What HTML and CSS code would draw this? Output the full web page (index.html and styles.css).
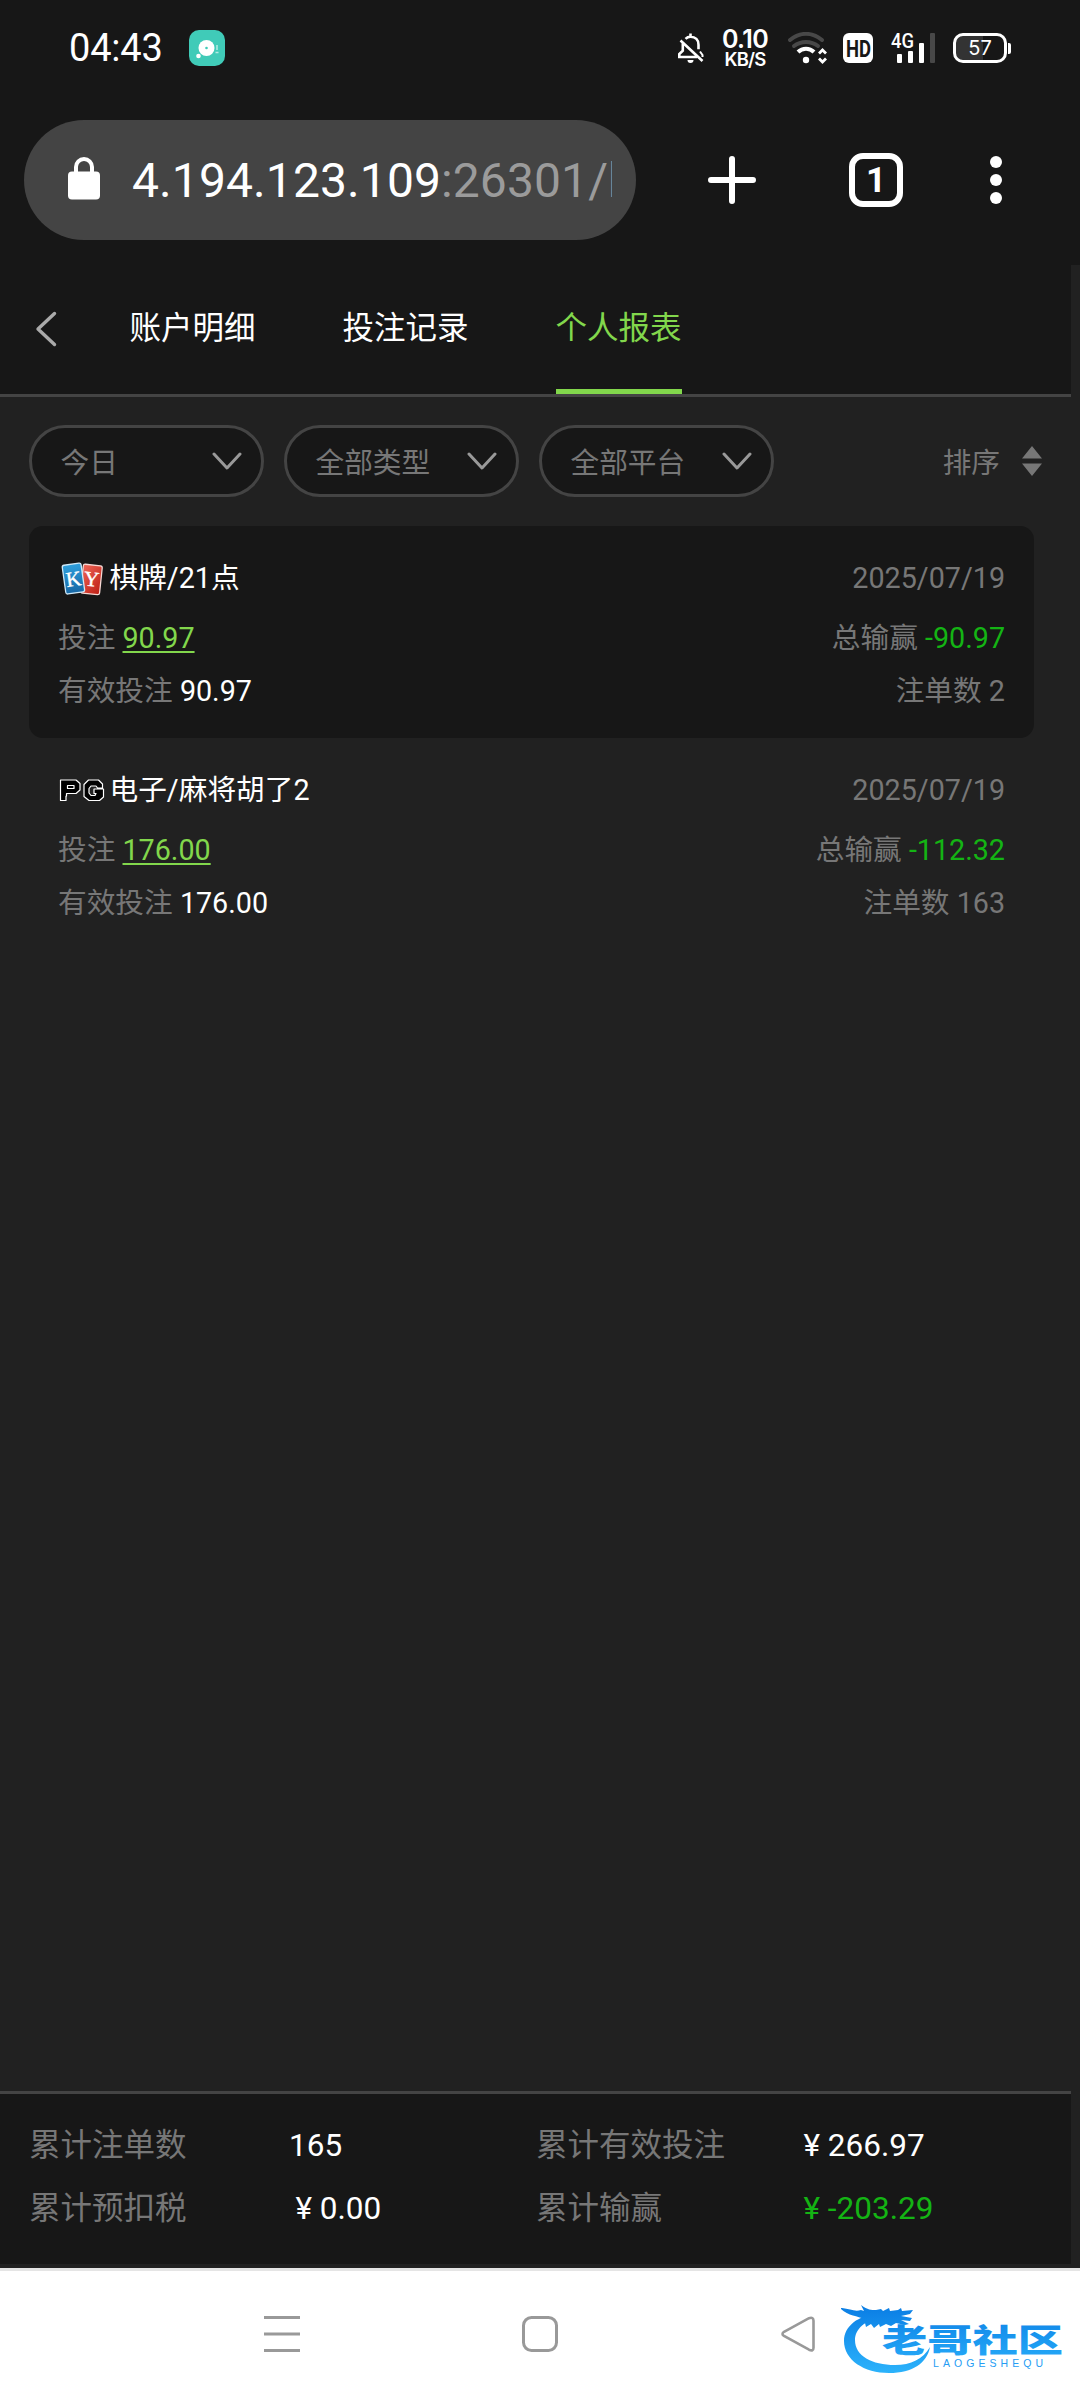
FILE: index.html
```html
<!DOCTYPE html>
<html lang="zh-CN">
<head>
<meta charset="utf-8">
<title>个人报表</title>
<link rel="stylesheet" href="styles.css">
</head>
<body>
<div class="screen">
  <header class="status">
    <span class="clock">04:43</span>
    <svg class="app-icon" width="36" height="36" viewBox="0 0 36 36"><rect width="36" height="36" rx="10" fill="#40cbb8"/><circle cx="17.500" cy="18" r="8" fill="#fff"/><circle cx="17.500" cy="18" r="1.300" fill="#40cbb8"/><circle cx="9.500" cy="26" r="2.300" fill="#fff"/><path d="M28 15v5M26.500 22.500h3" stroke="#b5ebe2" stroke-width="1.500"/></svg>
    <div class="indicators">
      <svg class="bell" width="27" height="32" viewBox="0 0 27 32" fill="none" stroke="#fff" stroke-width="2.600"><path d="M8.500 6.800C10 5.300 11.700 4.700 13.500 4.700c5 0 8 3.400 8 8v4.500M13.500 1.500v3M5.800 11.500v7.200L2.300 22v3H20M3.500 8.500 25.500 29"/><path d="M23 19.500l2.500 3.500v2" stroke-width="2"/><path d="M10.500 28h6a3 3 0 0 1-6 0z" fill="#fff" stroke="none"/></svg>
      <div class="speed"><b class="rate">0.10</b><b class="unit">KB/S</b></div>
      <svg class="wifi" width="40" height="32" viewBox="0 0 40 32" fill="none" stroke-linecap="round"><path d="M2 8C12-.2 24-.2 34 8" stroke="#484848" stroke-width="4"/><path d="M6 14C13 8.500 23 8.500 30 14" stroke="#484848" stroke-width="4"/><path d="M10 20c4.500-4.500 11.500-4.500 16 0" stroke="#fff" stroke-width="4" stroke-linecap="butt"/><circle cx="18" cy="28" r="3.200" fill="#fff"/><path d="M31 21.500l3.500-3.500 3.500 3.500M31 26.500l3.500 3.500 3.500-3.500" stroke="#fff" stroke-width="2.800" stroke-linecap="butt"/></svg>
      <svg class="hd" width="30" height="30" viewBox="0 0 30 30"><rect width="30" height="30" rx="6" fill="#fff"/><text x="3" y="23.500" textLength="25" lengthAdjust="spacingAndGlyphs">HD</text></svg>
      <div class="cell"><svg width="44" height="30" viewBox="0 0 44 30"><text class="net" x="0" y="14.500" textLength="23" lengthAdjust="spacingAndGlyphs">4G</text><rect x="6" y="21" width="5" height="9" rx="1" fill="#fff"/><rect x="17" y="18" width="5" height="12" rx="1" fill="#fff"/><rect x="28" y="10" width="5" height="20" rx="1" fill="#fff"/><rect x="39" width="5" height="30" rx="1" fill="#484848"/></svg></div>
      <div class="battery"><span>57</span></div>
    </div>
  </header>

  <div class="toolbar">
    <div class="omnibox">
      <svg class="lock" width="32" height="43" viewBox="0 0 32 43"><path d="M8 17V10a8 8 0 0 1 16 0v7" fill="none" stroke="#fff" stroke-width="4"/><rect y="14.500" width="32" height="28" rx="4" fill="#fff"/></svg>
      <div class="url">4.194.123.109<span class="port">:26301/h</span></div>
    </div>
    <svg class="plus" width="48" height="48" viewBox="0 0 48 48"><path d="M24 3v42M3 24h42" stroke="#fff" stroke-width="6" stroke-linecap="round"/></svg>
    <div class="tab-count">1</div>
    <svg class="dots" width="12" height="48" viewBox="0 0 12 48" fill="#fff"><circle cx="6" cy="6" r="6"/><circle cx="6" cy="24" r="6"/><circle cx="6" cy="42" r="6"/></svg>
  </div>

  <main class="page">
    <nav class="tabs">
      <svg class="back" width="22" height="36" viewBox="0 0 22 36"><path d="M19.500 2.500 3 18l16.500 15.500" fill="none" stroke="#aaa" stroke-width="3.400" stroke-linecap="round" stroke-linejoin="round"/></svg>
      <span class="tab">账户明细</span>
      <span class="tab">投注记录</span>
      <span class="tab active">个人报表</span>
    </nav>

    <div class="filters">
      <div class="pill">今日<svg class="chev" width="30" height="18" viewBox="0 0 30 18"><path d="M2 2l13 14L28 2"/></svg></div>
      <div class="pill">全部类型<svg class="chev" width="30" height="18" viewBox="0 0 30 18"><path d="M2 2l13 14L28 2"/></svg></div>
      <div class="pill">全部平台<svg class="chev" width="30" height="18" viewBox="0 0 30 18"><path d="M2 2l13 14L28 2"/></svg></div>
      <div class="sort">排序<svg width="20" height="30" viewBox="0 0 20 30" fill="#777"><path d="M10 0l10 12.500H0zM10 30L0 17.500h20z"/></svg></div>
    </div>

    <section class="list">
      <article class="record shaded">
        <div class="row title"><span class="name"><svg class="brand" width="48" height="36" viewBox="0 0 48 36">
          <defs><linearGradient id="blue" x2="0" y2="1"><stop stop-color="#2f9fdc"/><stop offset="1" stop-color="#1767a5"/></linearGradient><linearGradient id="red" x2="1" y2="1"><stop stop-color="#ef6658"/><stop offset="1" stop-color="#bd1e13"/></linearGradient></defs>
          <rect x="24" y="4" width="19" height="29" rx="2" transform="rotate(6 34 18)" fill="url(#red)" stroke="#f5d8d4" stroke-width="1.300"/><rect x="6" y="3" width="19" height="29" rx="2" transform="rotate(-8 16 18)" fill="url(#blue)" stroke="#cfe9f8" stroke-width="1.300"/><text x="8" y="25" class="card-letter" transform="rotate(-8 16 18)">K</text><text x="26" y="25" class="card-letter" transform="rotate(6 34 18)">Y</text></svg><span class="game">棋牌/21点</span></span><span>2025/07/19</span></div>
        <div class="row bet"><span>投注 <a class="link">90.97</a></span><span>总输赢 <em class="loss">-90.97</em></span></div>
        <div class="row valid"><span>有效投注 <em class="value">90.97</em></span><span>注单数 2</span></div>
      </article>
      <article class="record">
        <div class="row title"><span class="name"><svg class="brand" width="48" height="36" viewBox="0 0 48 36" fill="#000" stroke="#fff" stroke-width="1.200" stroke-linejoin="round"><path d="M2.500 7h15.500l4 3.500v6.500l-4 3.500h-9.500v2.500H8v4.500H2.500zM9.500 12.500h6.500v3H9.500z"/><path d="M30.500 7h10l4 4v4h-5l-1.500-2H33l-2 2.500v4.500l2 2.500h4l1-2h-2v-4.500h9.500v8L41.500 27.500H31l-5-4v-12z"/></svg><span class="game">电子/麻将胡了2</span></span><span>2025/07/19</span></div>
        <div class="row bet"><span>投注 <a class="link">176.00</a></span><span>总输赢 <em class="loss">-112.32</em></span></div>
        <div class="row valid"><span>有效投注 <em class="value">176.00</em></span><span>注单数 163</span></div>
      </article>
    </section>

    <footer class="summary">
      <span>累计注单数</span><span class="value">165</span><span>累计有效投注</span><span class="value money">¥ 266.97</span>
      <span>累计预扣税</span><span class="value money">¥ 0.00</span><span>累计输赢</span><span class="loss money">¥ -203.29</span>
    </footer>
  </main>

  <div class="navbar">
    <svg class="nav-menu" width="36" height="36" viewBox="0 0 36 36" stroke="#999" stroke-width="3"><path d="M0 1.500h36M0 18h36M0 34.500h36"/></svg>
    <svg class="nav-home" width="36" height="36" viewBox="0 0 36 36"><rect x="1.500" y="1.500" width="33" height="33" rx="8" fill="none" stroke="#999" stroke-width="3"/></svg>
    <svg class="nav-back" width="34" height="36" viewBox="0 0 34 36"><path d="M3 15.800 28 2.200q4.500-1.500 4.500 2.500v27q0 4-4.500 2L3 20q-3-2.100 0-4.200z" fill="none" stroke="#999" stroke-width="2.600"/></svg>
    <svg class="watermark" width="240" height="90" viewBox="0 0 240 90">
      <defs><linearGradient id="wave" gradientUnits="userSpaceOnUse" x1="0" y1="14" x2="0" y2="78"><stop stop-color="#0b7fe5"/><stop offset="1" stop-color="#2bb2fb"/></linearGradient></defs>
      <path fill="url(#wave)" d="M41 21C20 19 3 31 3 47c0 19 20 32 45 32 24 0 38-10 41-26-7 12-19 18-35 18-23 0-40-9-40-25 0-11 10-20 27-23z"/>
      <path fill="url(#wave)" d="M1 14c8 1 13 4 19 2l3 1-3-6c7 5 10 5 15 5l5-1 2 2 6-3 1 3 8-1 3-2 1 3 11-1-3 4-9 2 11 2-2 3-9-1 8 4-4 1-9-2-5 3-5-2-6 3-1-3-5 4-3-4-5 3-1-4-5 1 4-5c-6-3-17-3-24-11z"/>
      <text x="41" y="58" class="wm-title" textLength="181" lengthAdjust="spacingAndGlyphs">老哥社区</text>
      <text x="92" y="73" class="wm-sub" textLength="110">LAOGESHEQU</text>
    </svg>
  </div>
</div>
</body>
</html>
```
FILE: styles.css
```css
* { box-sizing: border-box; }
body { margin: 0; background: #212121; font-family: Roboto, "Noto Sans CJK SC", sans-serif; }
svg { display: block; flex: none; }
em { font-style: normal; }
.screen { width: 1080px; height: 2400px; display: flex; flex-direction: column; overflow: hidden; }

.status { height: 96px; background: #171717; color: #fff; display: flex; align-items: center; padding: 0 73px 0 69px; }
.clock { font-size: 38px; line-height: 44px; width: 120px; letter-spacing: -.2px; }
.indicators { margin-left: auto; display: flex; align-items: center; }
.bell { margin-right: 17px; }
.speed { width: 48px; display: flex; flex-direction: column; align-items: center; }
.rate { font: 600 25px/21px Inter, sans-serif; letter-spacing: -.6px; }
.unit { font: 600 18.500px/18px Inter, sans-serif; letter-spacing: -.8px; }
.wifi { margin: 0 15px 0 19px; }
.hd { font: bold 24px Roboto, sans-serif; fill: #171717; }
.cell { margin-left: 18px; }
.net { font: 500 20px Roboto, sans-serif; fill: #fff; }
.battery { margin-left: 18px; width: 54px; height: 30px; border: 3px solid #fff; border-radius: 10px; background: linear-gradient(90deg, #333 57%, #171717 57%); font: 20px/25px Inter, sans-serif; text-align: center; position: relative; }
.battery::after { content: ""; position: absolute; right: -7px; top: 7px; width: 3px; height: 11px; border-radius: 0 2px 2px 0; background: #fff; }

.toolbar { height: 169px; background: #171717; display: flex; align-items: center; padding: 0 78px 1px 24px; }
.omnibox { width: 612px; height: 120px; border-radius: 60px; background: #444; display: flex; align-items: center; padding: 0 24px 0 44px; }
.lock { margin-top: -3px; }
.url { margin-left: 32px; padding-top: 2px; flex: 1; overflow: hidden; white-space: nowrap; color: #fff; font-size: 48px; line-height: 60px; letter-spacing: .1px; }
.port { color: #9b9b9b; }
.plus { margin-left: 72px; }
.tab-count { margin-left: 93px; width: 54px; height: 54px; border: 6px solid #fff; border-radius: 14px; color: #fff; font: bold 35px/43px Roboto, sans-serif; text-align: center; }
.dots { margin-left: 87px; }

.page { height: 2003px; width: 1071px; display: flex; flex-direction: column; }
.tabs { height: 132px; background: #171717; border-bottom: 3px solid #444; display: flex; align-items: stretch; padding-left: 35px; color: #fff; }
.back { margin-top: 46px; margin-right: 72.500px; }
.tab { font-size: 31.500px; line-height: 128px; height: 129px; margin-right: 87px; white-space: nowrap; }
.active { color: #82d74c; border-bottom: 5px solid #82d74c; }
.filters { height: 129px; display: flex; align-items: center; gap: 20px; padding: 0 29px 2px; color: #777; font-size: 28.700px; }
.pill { width: 235px; height: 72px; border: 3px solid #444; border-radius: 36px; background: #171717; display: flex; align-items: center; justify-content: space-between; padding: 0 19px 0 28.500px; }
.chev { fill: none; stroke: #999; stroke-width: 3; stroke-linecap: round; stroke-linejoin: round; }
.sort { margin-left: auto; display: flex; align-items: center; gap: 22px; }

.list { flex: 1; padding: 0 37px 0 29px; color: #777; font-size: 28.700px; }
.record { height: 211.500px; border-radius: 14px; padding: 21px 29px 0; }
.shaded { background: #171717; }
.row { display: flex; justify-content: space-between; align-items: center; white-space: nowrap; }
.title { height: 62px; }
.bet { height: 53px; }
.valid { height: 53px; }
.name { color: #fff; display: flex; align-items: center; }
.game { padding-bottom: 5px; }
.brand { margin-right: 3.500px; margin-top: 2px; }
.card-letter { font: 21px "Liberation Serif", serif; fill: #fff; stroke: #fff; stroke-width: .4px; }
.link { color: #82d74c; text-decoration: underline; text-underline-offset: 3px; text-decoration-thickness: 2px; }
.value { color: #fff; }
.loss { color: #14b414; }

.summary { height: 173px; margin-bottom: 4px; background: #171717; border-top: 3px solid #444; color: #777; font-size: 31.500px; padding: 20px 0 0 29px; display: grid; grid-template-columns: 260px 247px 261px 1fr; grid-auto-rows: 63px; line-height: 63px; white-space: nowrap; }
.money { padding-left: 6.500px; }

.navbar { height: 132px; background: #fff; border-top: 3px solid #e5e5e5; display: flex; align-items: center; padding: 0 0 4px 264px; }
.nav-menu { margin-right: 222px; }
.nav-home { margin-right: 223px; }
.watermark { margin-left: 26px; margin-top: 11px; }
.wm-title { font: 900 32px "Noto Sans CJK SC", sans-serif; fill: url(#wave); }
.wm-sub { font: 10.500px "Liberation Sans", sans-serif; fill: #269df4; }
```
